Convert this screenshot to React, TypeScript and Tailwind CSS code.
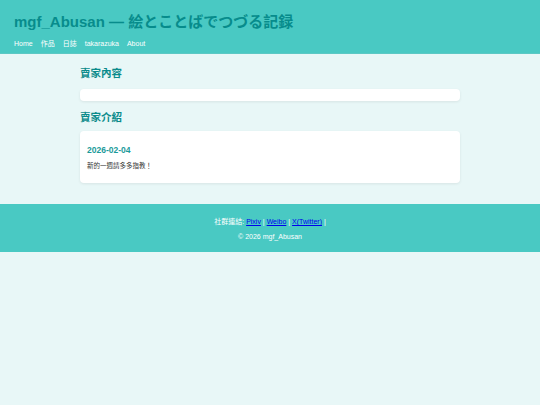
const nav = ["Home", "作品", "日誌", "takarazuka", "About"];

export default function App() {
  return (
    <div className="min-h-[405px] bg-[#e8f7f7] font-['Liberation_Sans','Noto_Sans_CJK_TC',sans-serif]">
      <header className="h-[54px] border-b border-[#5cc8c4] bg-[#49c9c3] px-[14px] pt-[13px]">
        <h1 className="text-[15px] font-bold leading-[18px] text-[#078c8c]">
          mgf_Abusan — 絵とことばでつづる記録
        </h1>
        <nav className="mt-[8px] flex gap-[8px] text-[7px] leading-[10px] text-white">
          {nav.map((n) => (
            <a key={n} href="#">
              {n}
            </a>
          ))}
        </nav>
      </header>

      <main className="mx-auto w-[380px] pt-[12px] pb-[21px]">
        <h2 className="text-[10.5px] font-bold leading-[14px] text-[#0a8b8b]">賣家內容</h2>
        <div className="mt-[9px] h-[12px] rounded-[4px] bg-white shadow-[0_1px_3px_rgba(0,0,0,0.08)]" />
        <h2 className="mt-[9px] text-[10.5px] font-bold leading-[14px] text-[#0a8b8b]">賣家介紹</h2>
        <div className="mt-[7px] rounded-[4px] bg-white px-[7px] pt-[13px] pb-[12px] shadow-[0_1px_3px_rgba(0,0,0,0.08)]">
          <h3 className="text-[8.5px] font-bold leading-[12px] text-[#1a9a9a]">2026-02-04</h3>
          <p className="mt-[5px] text-[6.5px] leading-[10px] text-[#333]">新的一週請多多指教！</p>
        </div>
      </main>

      <footer className="h-[48px] bg-[#49c9c3] pt-[13px] text-center text-[7px] leading-[10px] text-white">
        <p>
          社群連結:{" "}
          <a href="#" className="text-[#0000ee] underline">Pixiv</a> |{" "}
          <a href="#" className="text-[#0000ee] underline">Weibo</a> |{" "}
          <a href="#" className="text-[#0000ee] underline">X(Twitter)</a> |
        </p>
        <p className="mt-[5px]">© 2026 mgf_Abusan</p>
      </footer>
    </div>
  );
}
